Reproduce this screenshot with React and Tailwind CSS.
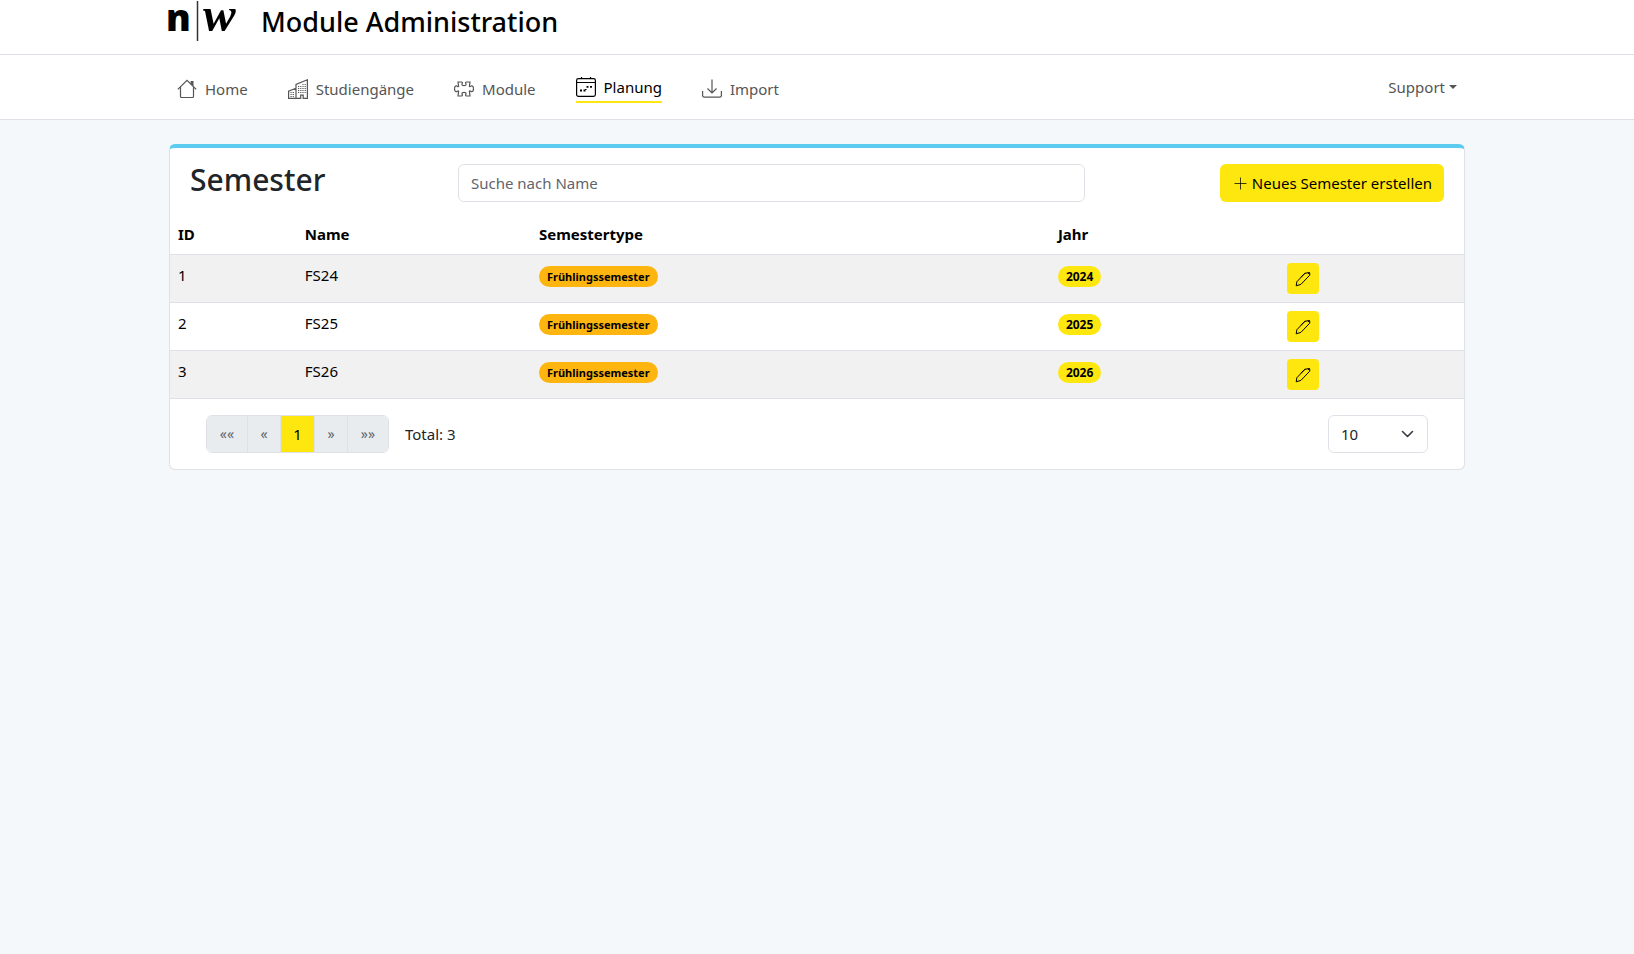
function Icon({ size = "size-5", children, box = "0 0 20 20", stroke = 1 }) {
  return (
    <svg
      className={`${size} shrink-0`}
      viewBox={box}
      fill="none"
      stroke="currentColor"
      strokeWidth={stroke}
      aria-hidden="true"
    >
      {children}
    </svg>
  );
}

function HouseIcon() {
  return (
    <Icon>
      <path d="M.8 10.4 10 1.400l9.200 9M3.500 8.200v9.300c0 .5.400 1 1 1h11c.600 0 1-.5 1-1V8.200" strokeWidth="1.200" />
      <path d="M13.600 2h2.900v5.400l-2.900-2.900z" fill="currentColor" stroke="none" />
    </Icon>
  );
}

function BuildingsIcon() {
  return (
    <Icon>
      <path d="M.6 19.400v-7.300L8 9.200V5.400L19.400.8v18.600h-4.200v-3.300h-2.500v3.300zM8 9.200v10.200" strokeWidth="1.200" />
      <path d="M2.500 13.500h4.200M2.500 15.500h4.200M2.500 17.500h4.200" strokeDasharray="1.200 1" />
      <path d="M10 7.500h8M10 9.500h8M10 11.500h8M10 13.500h8M14.400 5.500h3.500" strokeDasharray="1.200 1" />
    </Icon>
  );
}

function PuzzleIcon() {
  return (
    <Icon>
      <path
        d="M4 3h3.700c.5 0 .8.4.7.9-.1.7-.5.9-.5 1.500 0 .9 1 1.200 2.100 1.200s2.100-.3 2.100-1.200c0-.6-.4-.8-.5-1.500-.1-.5.2-.9.7-.9H16l-.6 3.900c0 .5.3.8.8.6.5-.2.7-.7 1.500-.7 1.100 0 1.800 1.500 1.800 2.900s-.7 2.900-1.800 2.900c-.8 0-1-.5-1.500-.7-.5-.2-.8.100-.8.6L16 17h-3.700c-.5 0-.8-.4-.7-.9.1-.7.5-.9.5-1.500 0-.9-1-1.200-2.100-1.200s-2.100.3-2.100 1.200c0 .6.4.8.5 1.500.1.5-.2.9-.7.9H4l.6-4.400c0-.5-.3-.8-.8-.6-.5.2-.7.700-1.500.7C1.200 12.700.5 11.200.5 9.800s.7-2.900 1.800-2.900c.8 0 1 .5 1.500.7.5.2.8-.1.8-.6z"
        strokeWidth="1.200"
      />
    </Icon>
  );
}

function CalendarIcon() {
  return (
    <Icon>
      <rect x=".6" y="1.600" width="18.800" height="17.800" rx="1.800" strokeWidth="1.200" />
      <path d="M.6 5.500h18.800M5.500 0v2M14.500 0v2" strokeWidth="1.200" />
      <path d="M4 13.500h2M7.500 13.500h2M10.500 9.800h2M14 9.800h2" strokeWidth="1.800" />
      <path d="M9 12.500h1.500" strokeWidth="1.200" />
    </Icon>
  );
}

function ImportIcon() {
  return (
    <Icon>
      <path d="M.6 12v4.600c0 .9.800 1.600 1.800 1.600h15.200c1 0 1.800-.7 1.800-1.600V12" strokeWidth="1.200" />
      <path d="M10 .5V14M5.500 9.500 10 14l4.500-4.500" strokeWidth="1.200" />
    </Icon>
  );
}

function PencilIcon() {
  return (
    <Icon size="size-4" box="0 0 16 16">
      <path d="m1.200 14.800.7-4.100L9.900 2.300l4.700-.8.200 2.600-8.900 9.300zM10.200 2.100l-4.400 4.200M12.800 1.800l1.600 1.600" />
    </Icon>
  );
}

const links = [
  { label: "Home", icon: HouseIcon },
  { label: "Studiengänge", icon: BuildingsIcon },
  { label: "Module", icon: PuzzleIcon },
  { label: "Planung", icon: CalendarIcon, active: true },
  { label: "Import", icon: ImportIcon },
];

const semesters = [
  { id: 1, name: "FS24", type: "Frühlingssemester", year: 2024 },
  { id: 2, name: "FS25", type: "Frühlingssemester", year: 2025 },
  { id: 3, name: "FS26", type: "Frühlingssemester", year: 2026 },
];

const pages = [
  { text: "««", label: "Erste Seite", width: "w-10" },
  { text: "«", label: "Vorherige Seite", width: "w-[33px]" },
  { text: "1", label: "Seite 1", width: "w-[34px]", active: true },
  { text: "»", label: "Nächste Seite", width: "w-[33px]" },
  { text: "»»", label: "Letzte Seite", width: "w-[41px]" },
];

function Logo() {
  return (
    <svg className="h-[42px] w-[70px] overflow-visible" viewBox="0 0 70 42" role="img" aria-label="n|w">
      <text x="-2" y="31" fontSize="37" fontWeight="800" fontFamily="Open Sans, sans-serif">n</text>
      <path d="M29.500 1v40" stroke="#333" strokeWidth="1.500" />
      <text x="35" y="31" fontSize="49" fontStyle="italic" fontWeight="700" fontFamily="Liberation Serif, serif">w</text>
    </svg>
  );
}

export default function App() {
  return (
    <div className="min-h-screen bg-[#f4f8fb] font-['Noto_Sans',sans-serif] text-[15px] leading-6 text-black">
      <header className="border-b border-[#dee2e6] bg-white">
        <div className="mx-auto flex h-[54px] max-w-[1298px] items-start gap-[23px]">
          <Logo />
          <h1 className="pt-1 text-[27px] leading-9 font-medium">Module Administration</h1>
        </div>
      </header>
      <nav className="border-b border-[#dee2e6] bg-white">
        <div className="mx-auto flex h-16 max-w-[1296px] items-center justify-between px-2">
          <ul className="flex items-center gap-10 pt-1">
            {links.map(({ label, icon: LinkIcon, active }) => (
              <li key={label}>
                <a
                  href="#"
                  className={`flex items-center gap-2 ${active ? "border-b-2 border-[#fde70e] pb-[2px] text-black" : "text-[#555]"}`}
                >
                  <LinkIcon />
                  {label}
                </a>
              </li>
            ))}
          </ul>
          <button type="button" className="flex items-center gap-1 text-[#555]">
            Support
            <svg className="h-1 w-2" viewBox="0 0 8 4" fill="currentColor" aria-hidden="true">
              <path d="M0 0h8L4 4z" />
            </svg>
          </button>
        </div>
      </nav>
      <main className="mx-auto max-w-[1296px] pt-6">
        <section className="overflow-hidden rounded-md border border-t-4 border-[#dee2e6] border-t-[#5bcbef] bg-white">
          <div className="flex items-start pt-4 pr-5 pb-3 pl-5">
            <h2 className="w-[268px] text-[30px] leading-8 font-medium text-[#212529]">Semester</h2>
            <input
              type="search"
              aria-label="Suche nach Name"
              placeholder="Suche nach Name"
              className="h-[38px] w-[627px] rounded-md border border-[#dee2e6] px-3 placeholder:text-[#5f656b]"
            />
            <button type="button" className="ml-auto flex h-[38px] items-center gap-1 rounded-md bg-[#fde70e] px-3">
              <Icon size="size-4" box="0 0 16 16">
                <path d="M8.500 2.500v12M2.500 8.500h12" strokeOpacity="0.75" />
              </Icon>
              Neues Semester erstellen
            </button>
          </div>
          <table className="w-full table-fixed text-left">
            <colgroup>
              <col className="w-[9.8%]" />
              <col className="w-[18.1%]" />
              <col className="w-[40.1%]" />
              <col className="w-[17.7%]" />
              <col />
            </colgroup>
            <thead>
              <tr className="border-b border-[#dee2e6]">
                <th className="p-2 font-bold">ID</th>
                <th className="p-2 font-bold">Name</th>
                <th className="p-2 font-bold">Semestertype</th>
                <th className="p-2 font-bold">Jahr</th>
                <td />
              </tr>
            </thead>
            <tbody>
              {semesters.map((s) => (
                <tr key={s.id} className="h-12 border-b border-[#dee2e6] align-top odd:bg-[#f1f1f1]">
                  <td className="px-2 py-2">{s.id}</td>
                  <td className="px-2 py-2">{s.name}</td>
                  <td className="px-2 py-[11px]">
                    <span className="flex h-[21px] w-fit items-center rounded-full bg-[#ffb50f] px-2 text-[11px] font-bold">
                      {s.type}
                    </span>
                  </td>
                  <td className="px-2 py-[11px]">
                    <span className="flex h-[21px] w-fit items-center rounded-full bg-[#fde70e] px-2 text-[12px] font-bold">
                      {s.year}
                    </span>
                  </td>
                  <td className="px-2 py-2">
                    <button
                      type="button"
                      aria-label={`${s.name} bearbeiten`}
                      className="flex h-[31px] w-8 items-center justify-center rounded-sm bg-[#fde70e]"
                    >
                      <PencilIcon />
                    </button>
                  </td>
                </tr>
              ))}
            </tbody>
          </table>
          <div className="flex items-center px-9 py-4">
            <div className="flex h-[38px] overflow-hidden rounded-md border border-[#dee2e6]">
              {pages.map((p) => (
                <button
                  key={p.text}
                  type="button"
                  aria-label={p.label}
                  className={`${p.width} border-l border-[#dee2e6] first:border-l-0 ${p.active ? "bg-[#fde70e]" : "bg-[#e9ecef] text-sm text-[#5f656b]"}`}
                >
                  {p.text}
                </button>
              ))}
            </div>
            <span className="ml-4 text-[#212529]">Total: 3</span>
            <div className="ml-auto grid items-center">
              <select
                aria-label="Einträge pro Seite"
                className="col-start-1 row-start-1 h-[38px] w-[100px] appearance-none rounded-md border border-[#dee2e6] bg-white px-3 text-[#212529]"
              >
                <option>10</option>
                <option>20</option>
                <option>50</option>
              </select>
              <svg
                className="pointer-events-none col-start-1 row-start-1 mr-3 size-4 justify-self-end"
                viewBox="0 0 16 16"
                fill="none"
                stroke="#343a40"
                strokeWidth="1.600"
                strokeLinecap="round"
                strokeLinejoin="round"
                aria-hidden="true"
              >
                <path d="m2.500 5.500 5 5 5-5" />
              </svg>
            </div>
          </div>
        </section>
      </main>
    </div>
  );
}
